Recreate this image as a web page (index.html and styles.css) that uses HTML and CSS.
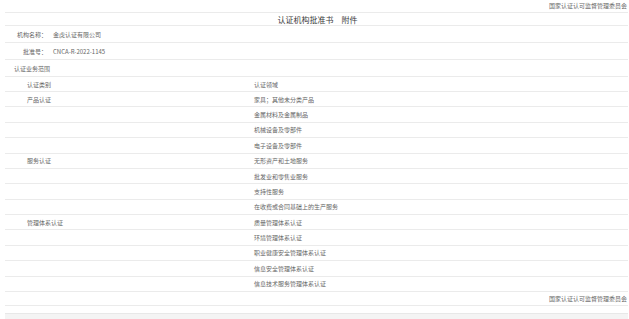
FILE: index.html
```html
<!DOCTYPE html>
<html lang="zh-CN">
<head>
<meta charset="utf-8">
<title>认证机构批准书 附件</title>
<link rel="stylesheet" href="styles.css">
</head>
<body>
<div class="page">
  <div class="row top"><span class="org">国家认证认可监督管理委员会</span></div>
  <div class="row title">认证机构批准书　附件</div>
  <div class="row info"><span class="label">机构名称：</span><span class="value">金虎认证有限公司</span></div>
  <div class="row info"><span class="label">批准号：</span><span class="value">CNCA-R-2022-1145</span></div>
  <div class="row scope">认证业务范围</div>
  <div class="table">
    <div class="trow head"><span class="c1">认证类别</span><span class="c2">认证领域</span></div>
    <div class="trow"><span class="c1">产品认证</span><span class="c2">家具；其他未分类产品</span></div>
    <div class="trow"><span class="c1"></span><span class="c2">金属材料及金属制品</span></div>
    <div class="trow"><span class="c1"></span><span class="c2">机械设备及零部件</span></div>
    <div class="trow"><span class="c1"></span><span class="c2">电子设备及零部件</span></div>
    <div class="trow"><span class="c1">服务认证</span><span class="c2">无形资产和土地服务</span></div>
    <div class="trow"><span class="c1"></span><span class="c2">批发业和零售业服务</span></div>
    <div class="trow"><span class="c1"></span><span class="c2">支持性服务</span></div>
    <div class="trow"><span class="c1"></span><span class="c2">在收费或合同基础上的生产服务</span></div>
    <div class="trow"><span class="c1">管理体系认证</span><span class="c2">质量管理体系认证</span></div>
    <div class="trow"><span class="c1"></span><span class="c2">环境管理体系认证</span></div>
    <div class="trow"><span class="c1"></span><span class="c2">职业健康安全管理体系认证</span></div>
    <div class="trow"><span class="c1"></span><span class="c2">信息安全管理体系认证</span></div>
    <div class="trow"><span class="c1"></span><span class="c2">信息技术服务管理体系认证</span></div>
  </div>
  <div class="row bottom"><span class="org">国家认证认可监督管理委员会</span></div>
  <div class="bar"></div>
</div>
</body>
</html>
```

FILE: styles.css
```css
html, body {
  margin: 0;
  padding: 0;
  background: #ffffff;
}
body {
  font-family: "Noto Sans CJK SC", "Noto Sans", sans-serif;
  font-size: 6px;
  color: #666666;
}
.page {
  margin-left: 5px;
  margin-right: 1px;
}
.row {
  box-sizing: border-box;
  display: flex;
  align-items: center;
  border-bottom: 1px solid #ebebeb;
}
.top {
  height: 13px;
  justify-content: flex-end;
  padding-right: 1px;
  padding-bottom: 2px;
}
.title {
  height: 13px;
  justify-content: center;
  font-size: 8px;
  color: #3a3a3a;
  padding-left: 2px;
}
.info {
  height: 17px;
}
.label {
  width: 42px;
  text-align: right;
}
.value {
  margin-left: 6px;
}
.scope {
  height: 17px;
  padding-left: 9px;
}
.table {
  display: flex;
  flex-direction: column;
}
.trow {
  box-sizing: border-box;
  display: grid;
  grid-template-columns: 227px 1fr;
  align-items: center;
  height: 15.38px;
  padding-left: 22px;
  border-bottom: 1px solid #ebebeb;
}
.trow.head {
  height: 15px;
}
.bottom {
  height: 14px;
  justify-content: flex-end;
  padding-right: 1px;
}
.bar {
  margin-top: 7px;
  height: 8px;
  background: #f4f4f4;
  border-top: 1px solid #e8e8e8;
}
```
